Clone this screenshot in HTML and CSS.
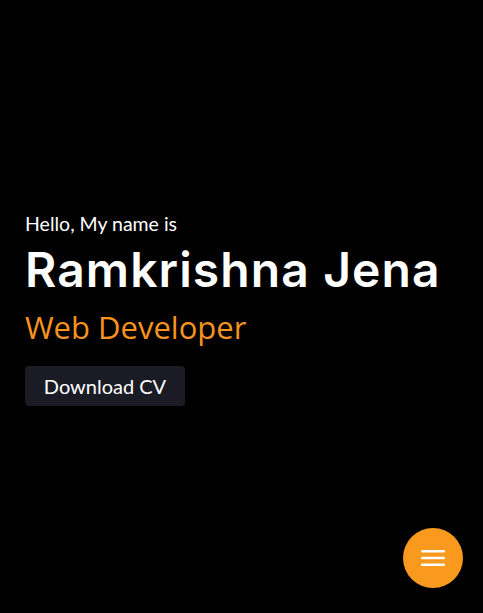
FILE: index.html
```html
<!DOCTYPE html>
<html>
<head>
<meta charset="utf-8">
<link rel="stylesheet" href="styles.css">
</head>
<body>
<main class="hero">
  <p class="hello">Hello, My name is</p>
  <h1 class="name">Ramkrishna Jena</h1>
  <h2 class="role">Web Developer</h2>
  <button class="cv">Download CV</button>
</main>
<button class="fab" aria-label="menu">
  <svg width="24" height="18" viewBox="0 0 24 18">
    <rect x="0" y="1" width="24" height="2.4" rx="1" fill="#fff"/>
    <rect x="0" y="7.8" width="24" height="2.4" rx="1" fill="#fff"/>
    <rect x="0" y="14.6" width="24" height="2.4" rx="1" fill="#fff"/>
  </svg>
</button>
</body>
</html>
```

FILE: styles.css
```css
html, body { margin: 0; padding: 0; background: #000; }
body { width: 483px; height: 613px; overflow: hidden; font-family: "Open Sans", sans-serif; color: #fff; }
.hero { display: flex; flex-direction: column; align-items: flex-start; padding: 212px 25px 0; }
.hello { margin: 0; font-family: "Lato", sans-serif; font-size: 19.5px; line-height: 24px; color: #fff; }
.name { margin: 6px 0 0; font-family: "Inter", sans-serif; font-weight: 600; font-size: 48px; line-height: 56px; letter-spacing: 1.1px; white-space: nowrap; }
.role { margin: 9px 0 0; font-family: "Open Sans", sans-serif; font-weight: 400; font-size: 31px; line-height: 40px; color: #f7931e; }
.cv { margin-top: 19px; width: 160px; height: 40px; border: none; border-radius: 4px; background: #1b1b26; color: #fff; font-family: "Lato", sans-serif; font-size: 20px; cursor: pointer; }
.fab { position: fixed; left: 403px; top: 528px; width: 60px; height: 60px; border-radius: 50%; border: none; background: #f99a1e; display: flex; align-items: center; justify-content: center; padding: 0; }
```
